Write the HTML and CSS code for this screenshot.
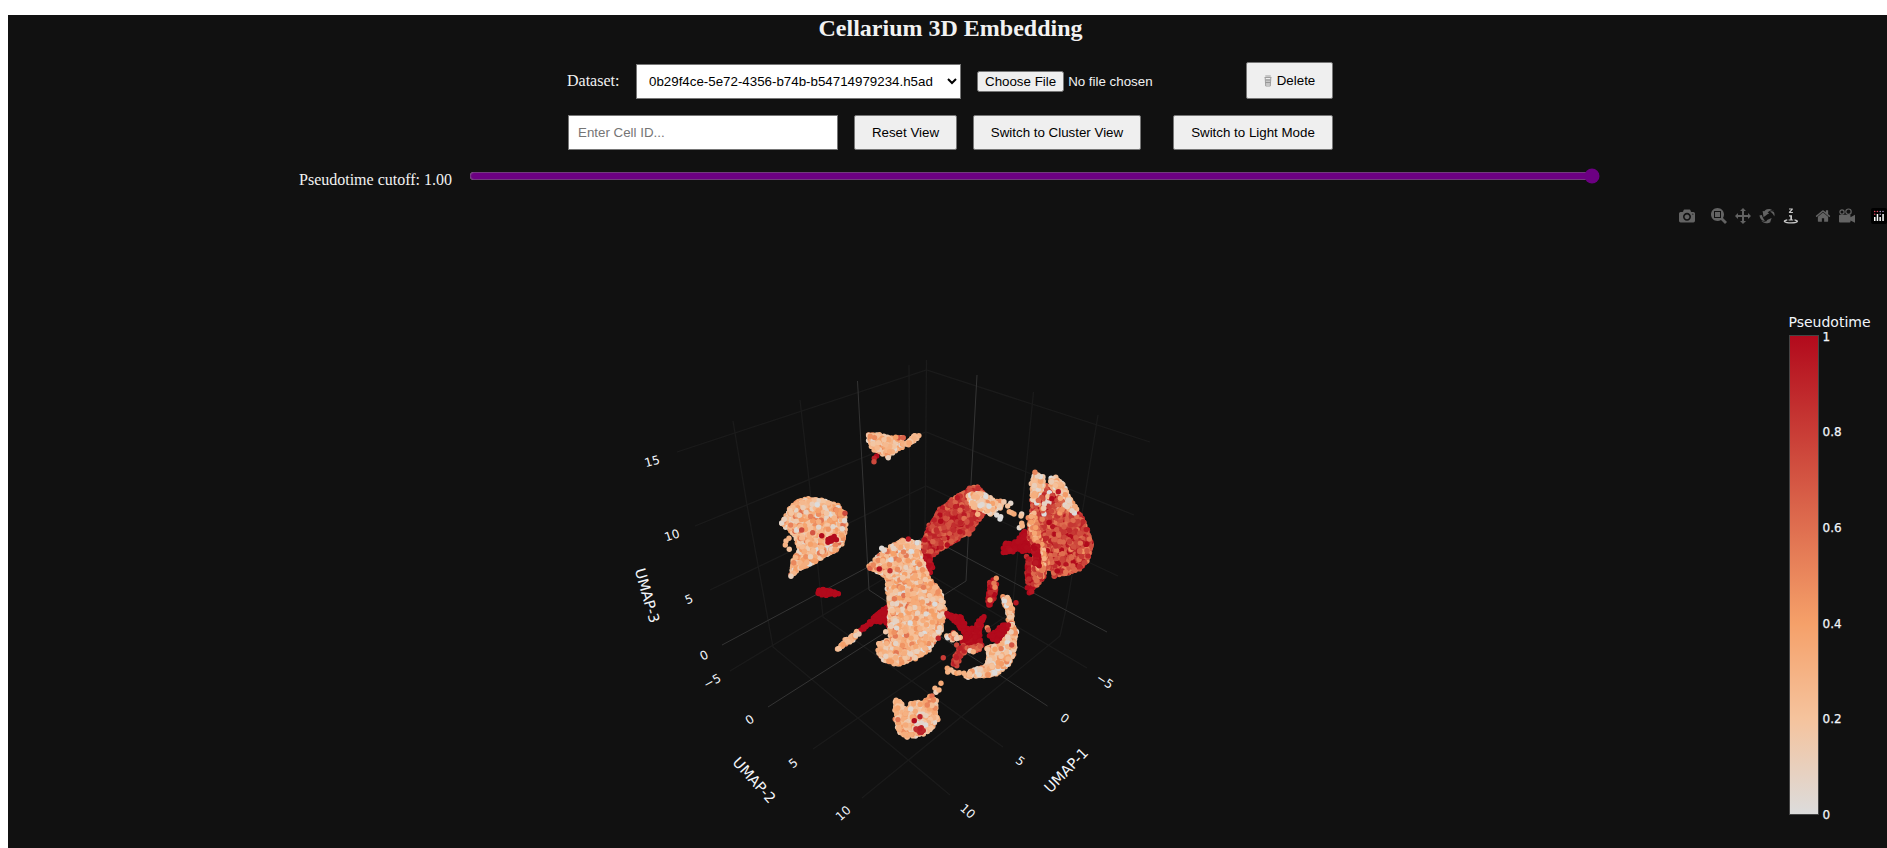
FILE: index.html
```html
<!DOCTYPE html>
<html lang="en">
<head>
<meta charset="utf-8">
<title>Cellarium 3D Embedding</title>
<link rel="stylesheet" href="styles.css">
</head>
<body>
<main class="app">
  <h2 class="title">Cellarium 3D Embedding</h2>
  <div class="controls">
    <div class="row">
      <label class="label" for="dataset">Dataset:</label>
      <select class="select" id="dataset"><option>0b29f4ce-5e72-4356-b74b-b54714979234.h5ad</option></select>
      <input class="file" type="file">
      <button class="btn btn-delete"><svg class="trash" viewBox="0 0 8 12"><path d="M0.5 2.5h7M1.3 1h5.4M1.2 3l.5 8h4.6l.5-8M3 4v6M5 4v6M1.5 5h5M1.7 7.5h4.6"/></svg>Delete</button>
    </div>
    <div class="row">
      <input class="search" type="text" placeholder="Enter Cell ID...">
      <button class="btn btn-reset">Reset View</button>
      <button class="btn btn-cluster">Switch to Cluster View</button>
      <button class="btn btn-mode">Switch to Light Mode</button>
    </div>
  </div>
  <div class="cutoff">
    <label class="label" for="cutoff">Pseudotime cutoff: 1.00</label>
    <input class="range" id="cutoff" type="range" min="0" max="1" step="0.01" value="1">
  </div>
  <div class="modebar">
    <svg class="icon" viewBox="0 0 1000 1000"><path transform="matrix(1 0 0 -1 0 850)" d="m500 450c-83 0-150-67-150-150 0-83 67-150 150-150 83 0 150 67 150 150 0 83-67 150-150 150z m400 150h-120c-16 0-34 13-39 29l-31 93c-6 15-23 28-40 28h-340c-16 0-34-13-39-28l-31-94c-6-15-23-28-40-28h-120c-55 0-100-45-100-100v-450c0-55 45-100 100-100h800c55 0 100 45 100 100v450c0 55-45 100-100 100z m-400-550c-138 0-250 112-250 250 0 138 112 250 250 250 138 0 250-112 250-250 0-138-112-250-250-250z m365 380c-19 0-35 16-35 35 0 19 16 35 35 35 19 0 35-16 35-35 0-19-16-35-35-35z"/></svg>
    <div class="group">
      <svg class="icon" viewBox="0 0 1000 1000"><path transform="matrix(1 0 0 -1 0 850)" d="m1000-25l-250 251c40 63 63 138 63 218 0 224-182 406-407 406-224 0-406-182-406-406s183-406 407-406c80 0 155 22 218 62l250-250 125 125z m-812 250l0 438 437 0 0-438-437 0z m62 375l313 0 0-312-313 0 0 312z"/></svg>
      <svg class="icon" viewBox="0 0 1000 1000"><path transform="matrix(1 0 0 -1 0 850)" d="m1000 350l-187 188 0-125-250 0 0 250 125 0-188 187-187-187 125 0 0-250-250 0 0 125-188-188 186-187 0 125 252 0 0-250-125 0 187-188 188 188-125 0 0 250 250 0 0-126 187 188z"/></svg>
      <svg class="icon" viewBox="0 0 1000 1000"><path transform="matrix(1 0 0 -1 0 850)" d="m922 660c-5 4-9 7-14 11-359 263-580-31-580-31l-102 28 58-400c0 1 1 1 2 2 118 108 351 249 351 249s-62 27-100 42c88 83 222 183 347 122 16-8 30-17 44-27-2 1-4 2-6 4z m36-329c0 0 64 229-88 296-62 27-124 14-175-11 157-78 225-208 249-266 8-19 11-31 11-31 2 5 6 15 11 32-5-13-8-20-8-20z m-775-239c70-31 117-50 198-32-121 80-199 346-199 346l-96-15-58-12c0 0 55-226 155-287z m603 133l-317-139c0 0 4-4 19-14 7-5 24-15 24-15s-177-147-389 4c235-287 536-112 536-112l31-22 100 299-4-1z"/></svg>
      <svg class="icon icon-active" viewBox="0 0 16 16"><path d="M6 .5h3.800v1L7.600 4.100h2.300v1H5.900v-1L8.200 1.500H6zM6 7.300h3v4.200h1.200v1.100H5.600v-1.100h1.700V8.400H6z"/><path class="ring" d="M4.300 11.900C-1 13 1.500 14.900 8 14.900s8.500-1.900 3.500-3"/></svg>
    </div>
    <div class="group">
      <svg class="icon" viewBox="0 0 928.6 1000"><path transform="matrix(1 0 0 -1 0 850)" d="m786 296v-267q0-15-11-26t-25-10h-214v214h-143v-214h-214q-15 0-25 10t-11 26v267q0 1 0 2t0 2l321 264 321-264q1-1 1-4z m124 39l-34-41q-5-5-12-6h-2q-7 0-12 3l-386 322-386-322q-7-4-13-4-7 2-12 7l-35 41q-4 5-3 13t6 12l401 334q18 15 42 15t43-15l136-114v109q0 8 5 13t13 5h107q8 0 13-5t5-13v-227l122-102q5-5 6-12t-4-13z"/></svg>
      <svg class="icon" viewBox="0 0 16 16"><path d="M1 6.800h9.500q1 0 1 1v1.400L16 6.800v8l-4.500-2.200v1q0 1-1 1H1q-1 0-1-1V7.800q0-1 1-1z"/><g class="reels"><circle cx="3" cy="4" r="2.100"/><circle cx="9.500" cy="3.700" r="2.700"/></g></svg>
    </div>
    <svg class="icon logo" viewBox="0 0 16 16"><rect width="16" height="16" rx="2" fill="#000"/><g fill="#fff"><rect x="3" y="9" width="1.500" height="4"/><rect x="5.700" y="6" width="1.500" height="7"/><rect x="8.400" y="9" width="1.500" height="4"/><rect x="11.300" y="6" width="1.500" height="7"/></g><g fill="#e34862"><circle cx="3.700" cy="3.500" r=".8"/><circle cx="3.700" cy="6.300" r=".8"/><circle cx="6.400" cy="3.500" r=".8"/></g><g fill="#cbb6e8"><circle cx="9.200" cy="3.500" r=".7"/><circle cx="9.200" cy="6.300" r=".7"/><circle cx="12" cy="3.500" r=".7"/></g></svg>
  </div>
  <svg class="plot" viewBox="8 232 1885 616">
    <defs>
      <linearGradient id="reds" x1="0" y1="1" x2="0" y2="0">
        <stop offset="0" stop-color="rgb(220,220,220)"/><stop offset=".2" stop-color="rgb(245,195,157)"/><stop offset=".4" stop-color="rgb(245,160,105)"/><stop offset="1" stop-color="rgb(178,10,28)"/>
      </linearGradient>
    </defs>
    <g class="grid">
      <path d="M677 452L926.500 370L1150 442M695 526L926 432L1134 515M710 590L926 486L1118 576"/>
      <path d="M733 421L747 505L773 647L950 795M800 400L809 480L823 617L1003 747M909 365L910 563M926.500 360L925 536"/>
      <path d="M730 671L910 563L1087 668M1033.500 392L1012 612L813 749M1098 415L1068 600L1060 636L862 798"/>
    </g>
    <path class="zero" d="M857.500 381L869 590L1047.500 706M722 645L926 536L1107 632M977 375L971 483L966 581L768 707"/>
    <g id="cells"></g>
    <g class="ticks" id="ticks"></g>
    <text class="bar-title" x="1788.500" y="326.500">Pseudotime</text>
    <rect x="1789.500" y="335.500" width="29" height="479" fill="url(#reds)" stroke="#444"/>
    <g class="bar-ticks">
      <text x="1822.500" y="340.500">1</text><text x="1822.500" y="436">0.8</text><text x="1822.500" y="531.500">0.6</text><text x="1822.500" y="627.500">0.4</text><text x="1822.500" y="723">0.2</text><text x="1822.500" y="818.500">0</text>
    </g>
  </svg>
</main>
<script src="plot.js"></script>
</body>
</html>
```
FILE: styles.css
```css
body {
  margin: 15px 0 0 8px;
  height: 833px;
  overflow: hidden;
  background: #fff;
}
.app {
  width: 1885px;
  height: 833px;
  background: #111;
  color: #f2f2f2;
  font-family: "Liberation Serif", serif;
  font-size: 16px;
  display: flex;
  flex-direction: column;
}
.title {
  margin: 0;
  font-size: 24px;
  line-height: 27px;
  text-align: center;
}
.controls {
  width: 766px;
  margin: 20px 0 0 559px;
  display: flex;
  flex-direction: column;
  gap: 16px;
}
.row {
  display: flex;
  gap: 16px;
  align-items: flex-end;
}
.row .label { align-self: center; width: 53px; padding-top: 1px; }
.select, .file, .btn, .search {
  box-sizing: border-box;
  margin: 0;
  font: 13.333px "Liberation Sans", sans-serif;
}
.select {
  width: 325px;
  height: 35px;
  padding: 8px;
  background: #fff;
  color: #000;
  border: 1px solid #767676;
  border-radius: 0;
}
.file { width: 253px; align-self: center; padding-top: 1px; }
.btn {
  height: 35px;
  padding: 0;
  background: #efefef;
  color: #000;
  border: 1px solid #767676;
  border-radius: 2px;
}
.btn-delete {
  width: 87px;
  height: 37px;
  display: flex;
  align-items: center;
  justify-content: center;
  gap: 5px;
}
.trash { width: 8px; height: 12px; fill: none; stroke: #8a8a8a; stroke-width: .8; }
.search {
  width: 270px;
  height: 35px;
  margin-left: 1px;
  padding: 8px 9px;
  border: 1px solid #767676;
}
.btn-reset { width: 103px; }
.btn-cluster { width: 168px; }
.btn-mode { width: 160px; margin-left: auto; }
.cutoff {
  display: flex;
  align-items: center;
  gap: 16px;
  margin: 18px 293px 0 291px;
  height: 22px;
}
.cutoff .label { width: 154px; white-space: nowrap; padding-top: 1px; }
.range {
  flex: 1;
  height: 16px;
  margin: 0 0 7px;
  accent-color: #6c0082;
}
.modebar {
  display: flex;
  align-items: center;
  justify-content: flex-end;
  gap: 16px;
  height: 16px;
  margin-top: 18px;
  padding-right: 6px;
}
.group { display: flex; gap: 8px; }
.icon { width: 16px; height: 16px; fill: #636363; }
.icon-active { fill: #c8c8c8; }
.ring { fill: none; stroke: #c8c8c8; stroke-width: 1.4; }
.reels { fill: none; stroke: #636363; stroke-width: 1.2; }
.plot {
  width: 1885px;
  height: 616px;
  margin-top: auto;
  font-family: "DejaVu Sans", Verdana, sans-serif;
  fill: #f2f5fa;
}
.grid path { fill: none; stroke: #1b1b1b; stroke-width: 1.3; }
.zero { fill: none; stroke: #343434; stroke-width: 1; }
.ticks { text-anchor: middle; font-size: 12px; }
.axis { font-size: 14.5px; }
.bar-title { font-size: 14px; }
.bar-ticks { font-size: 12px; stroke: #f2f5fa; stroke-width: .25; }
```
FILE: plot.js
```javascript
const NS = 'http://www.w3.org/2000/svg';
const stops = [[0, 220, 220, 220], [.2, 245, 195, 157], [.4, 245, 160, 105], [1, 178, 10, 28]];
let seed = 7;
function rnd() {
  seed = (seed * 1664525 + 1013904223) % 4294967296;
  return seed / 4294967296;
}
function color(v) {
  v = Math.max(0, Math.min(1, v));
  let i = 0;
  while (v > stops[i + 1][0]) i++;
  const a = stops[i], b = stops[i + 1], t = (v - a[0]) / (b[0] - a[0]);
  return 'rgb(' + [1, 2, 3].map(k => Math.round(a[k] + (b[k] - a[k]) * t)).join(',') + ')';
}
const cells = document.getElementById('cells');
function dot(x, y, v) {
  const c = document.createElementNS(NS, 'circle');
  c.setAttribute('cx', x.toFixed(1));
  c.setAttribute('cy', y.toFixed(1));
  c.setAttribute('r', 2.7);
  c.setAttribute('fill', color(v));
  cells.appendChild(c);
}
function inside(p, x, y) {
  let r = false;
  for (let i = 0, j = p.length - 1; i < p.length; j = i++) {
    if ((p[i][1] > y) !== (p[j][1] > y) &&
        x < (p[j][0] - p[i][0]) * (y - p[i][1]) / (p[j][1] - p[i][1]) + p[i][0]) r = !r;
  }
  return r;
}
/* A cluster: outline in thirds of a unit from its origin, mean value and spread. */
function cluster([ox, oy], flat, mean, spread, density = .35) {
  const p = [];
  for (let i = 0; i < flat.length; i += 2) p.push([ox + flat[i] / 3, oy + flat[i + 1] / 3]);
  const xs = p.map(q => q[0]), ys = p.map(q => q[1]);
  const x0 = Math.min(...xs), x1 = Math.max(...xs), y0 = Math.min(...ys), y1 = Math.max(...ys);
  const pick = () => mean + (rnd() + rnd() + rnd() - 1.5) * spread * 1.15;
  if (density >= .3) {
    const base = document.createElementNS(NS, 'polygon');
    base.setAttribute('points', p.map(q => q.join()).join(' '));
    base.setAttribute('fill', color(mean));
    cells.appendChild(base);
    p.forEach((q, i) => {
      const n = p[(i + 1) % p.length], d = Math.hypot(n[0] - q[0], n[1] - q[1]);
      for (let s = 0; s < d; s += 4) dot(q[0] + (n[0] - q[0]) * s / d + rnd() * 1.8 - .9, q[1] + (n[1] - q[1]) * s / d + rnd() * 1.8 - .9, pick());
    });
  }
  const count = (x1 - x0) * (y1 - y0) * density;
  for (let i = 0; i < count; i++) {
    const x = x0 + rnd() * (x1 - x0), y = y0 + rnd() * (y1 - y0);
    if (inside(p, x, y)) dot(x, y, pick());
  }
}
function dots([ox, oy], list) {
  for (let i = 0; i < list.length; i += 3) dot(ox + list[i] / 3, oy + list[i + 1] / 3, list[i + 2]);
}
const L = [600, 350], M = [840, 350], S = [620, 560], R = [880, 560];

cluster(L, [570,475, 592,455, 625,448, 665,452, 712,468, 732,490, 736,525, 730,570, 712,598, 680,613, 640,638, 600,655, 574,675, 580,630, 600,600, 585,555, 548,520], .27, .24);
cluster(L, [690,470, 715,472, 735,492, 728,505], .45, .15, .2);
dots(L, [545,519,.05, 553,508,.1, 558,573,.25, 556,585,.3, 568,598,.2, 567,565,.3, 573,679,.1, 605,540,.75, 638,548,.7, 665,557,1, 735,490,.75]);
cluster(L, [682,568, 705,562, 708,570, 684,575], 1, 0);
cluster(L, [656,720, 668,717, 690,722, 714,732, 680,735, 656,730], 1, 0);

cluster(M, [84,255, 130,257, 165,267, 185,263, 185,290, 165,300, 140,318, 120,305, 103,298, 92,280], .27, .2);
cluster(M, [187,285, 205,275, 225,255, 236,257, 232,264, 205,282], .25, .15);
dots(M, [175,263,.7, 190,263,.65, 167,262,.4, 110,318,1, 103,325,.9, 102,335,.75, 145,323,.1]);

cluster(M, [252,570, 270,528, 300,480, 345,445, 390,415, 412,410, 430,430, 436,480, 418,508, 385,545, 340,575, 300,598, 270,618, 250,628], .78, .18);
cluster(M, [385,435, 430,430, 460,450, 488,458, 480,472, 450,490, 430,480, 400,470], .2, .2);
dots(M, [393,540,.75, 387,552,.7, 398,536,.8, 492,455,.15, 512,460,.05, 503,468,.2, 470,495,.02, 482,500,.02, 480,507,0, 508,485,.35, 515,488,.3, 522,492,.35, 545,492,.1, 543,498,.2, 545,520,.3, 538,533,.05, 547,528,.3, 413,493,.3]);
cluster(M, [245,618, 265,618, 276,655, 268,672, 250,640], .98, .04);

cluster(S, [722,212, 750,185, 780,155, 805,140, 812,175, 808,200, 795,185, 770,182, 740,200], 1, 0);
cluster(S, [653,268, 680,238, 712,217, 716,222, 690,245], .25, .22);
cluster(M, [88,650, 112,622, 150,592, 185,572, 235,577, 240,620, 255,660, 275,700, 300,722, 312,780, 302,840, 278,880, 265,900, 225,924, 172,942, 128,930, 117,900, 118,880, 155,870, 150,835, 150,800, 147,740, 140,682, 112,664], .28, .24);
dots(M, [118,657,.98, 150,662,.85, 205,567,.95, 125,595,.02, 133,600,.05, 90,655,.6, 100,645,.5, 137,845,.15]);

cluster(M, [552,545, 562,562, 568,600, 545,605, 532,590, 520,603, 490,608, 496,578, 515,582, 530,575], 1, .02);
cluster(M, [562,622, 590,640, 600,690, 572,722, 562,680], .93, .12);
cluster(M, [575,500, 578,450, 610,405, 640,410, 690,470, 722,495, 740,540, 755,585, 742,632, 718,656, 680,670, 640,676, 640,655, 612,655, 612,680, 588,706, 582,660, 585,600, 568,560], .76, .22);
cluster(M, [576,400, 586,370, 608,382, 610,405, 596,430, 580,450], .2, .22);
cluster(M, [632,385, 650,382, 668,405, 690,450, 712,478, 690,475, 660,440, 634,405], .22, .22);
cluster(M, [595,440, 640,420, 700,470, 705,495, 620,490, 570,510], .4, .6, .06);
cluster(M, [567,505, 580,490, 610,600, 620,640, 600,680, 578,560], .5, .3, .3);
cluster(M, [582,590, 592,590, 596,645, 584,640], .98, .03);
dots(M, [585,367,.5, 655,425,.95, 675,465,.05, 682,470,.1, 568,728,1, 562,713,1, 575,725,.95]);

cluster(R, [203,163, 242,172, 262,206, 285,205, 308,172, 298,215, 300,255, 270,265, 248,245, 258,225, 232,190], 1, .02);
cluster(R, [248,258, 260,268, 240,290, 228,315, 218,310, 232,280], .78, .15);
cluster(R, [202,230, 222,220, 240,235, 215,238], .3, .4);
cluster(R, [262,264, 305,258, 300,268, 280,272], .75, .2);
cluster(R, [330,68, 345,60, 348,80, 342,115, 325,138, 328,100], .95, .12);
dots(R, [349,55,.45, 342,70,.55, 345,82,.5, 330,120,.45, 312,170,1, 308,180,1, 270,272,.1, 280,275,.3, 230,255,.75, 240,265,.9]);
cluster(R, [370,112, 383,112, 397,145, 396,190, 407,215, 403,260, 398,292, 375,320, 350,342, 300,348, 260,350, 272,332, 320,318, 328,290, 322,262, 345,258, 380,232, 390,200, 385,160], .24, .25);
cluster(R, [330,225, 350,212, 370,198, 380,205, 368,225, 350,244, 338,235], 1, 0);
dots(R, [202,325,.35, 203,336,.3, 213,330,.25, 222,337,.2, 230,340,.4, 238,338,.3, 252,340,.3, 375,195,1, 385,195,.98, 322,203,.5, 325,210,.75, 175,235,.9, 190,293,.8, 408,128,.95, 395,255,.7]);

cluster(R, [46,420, 60,425, 74,450, 90,445, 92,430, 130,430, 152,412, 168,422, 165,450, 172,480, 150,508, 120,525, 82,530, 58,515, 48,475], .28, .2);
dots(R, [165,385,.3, 168,397,.1, 177,390,.3, 183,370,.35, 156,408,.6, 160,420,.5, 110,490,.02, 125,490,.05, 137,495,.02, 115,498,.1, 103,482,1, 120,470,.9]);
cluster(R, [108,508, 125,505, 132,513, 120,520], .88, .05);

[['15', 652, 461, -15], ['10', 672, 535, -18], ['5', 689, 599, -22], ['0', 704, 655, -27],
 ['−5', 712, 681, -28], ['0', 749.5, 719.500, -33], ['5', 793, 763, -38], ['10', 843, 813, -42],
 ['−5', 1105, 681, 33], ['0', 1065, 718, 35], ['5', 1020.500, 761, 38], ['10', 968, 811, 42],
 ['UMAP-3', 647.500, 595.500, 74, 1], ['UMAP-2', 754.500, 780, 48, 1], ['UMAP-1', 1066, 770, -46, 1]
].forEach(([s, x, y, a, axis]) => {
  const t = document.createElementNS(NS, 'text');
  t.textContent = s;
  t.setAttribute('y', axis ? 5.3 : 4.4);
  t.setAttribute('transform', `translate(${x} ${y}) rotate(${a})`);
  if (axis) t.setAttribute('class', 'axis');
  document.getElementById('ticks').appendChild(t);
});
```
